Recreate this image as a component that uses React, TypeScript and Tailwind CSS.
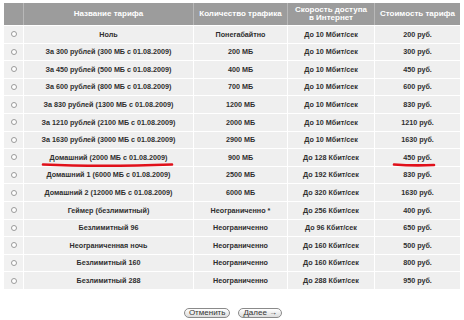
import React from "react";

const rows: [string, string, string, string][] = [
  ["Ноль", "Понегабайтно", "До 10 Мбит/сек", "200 руб."],
  ["За 300 рублей (300 МБ с 01.08.2009)", "200 МБ", "До 10 Мбит/сек", "300 руб."],
  ["За 450 рублей (500 МБ с 01.08.2009)", "400 МБ", "До 10 Мбит/сек", "450 руб."],
  ["За 600 рублей (800 МБ с 01.08.2009)", "700 МБ", "До 10 Мбит/сек", "600 руб."],
  ["За 830 рублей (1300 МБ с 01.08.2009)", "1200 МБ", "До 10 Мбит/сек", "830 руб."],
  ["За 1210 рублей (2100 МБ с 01.08.2009)", "2000 МБ", "До 10 Мбит/сек", "1210 руб."],
  ["За 1630 рублей (3000 МБ с 01.08.2009)", "2900 МБ", "До 10 Мбит/сек", "1630 руб."],
  ["Домашний (2000 МБ с 01.08.2009)", "900 МБ", "До 128 Кбит/сек", "450 руб."],
  ["Домашний 1 (6000 МБ с 01.08.2009)", "2500 МБ", "До 192 Кбит/сек", "830 руб."],
  ["Домашний 2 (12000 МБ с 01.08.2009)", "6000 МБ", "До 320 Кбит/сек", "1630 руб."],
  ["Геймер (безлимитный)", "Неограниченно *", "До 256 Кбит/сек", "400 руб."],
  ["Безлимитный 96", "Неограниченно", "До 96 Кбит/сек", "650 руб."],
  ["Неограниченная ночь", "Неограниченно", "До 160 Кбит/сек", "500 руб."],
  ["Безлимитный 160", "Неограниченно", "До 160 Кбит/сек", "800 руб."],
  ["Безлимитный 288", "Неограниченно", "До 288 Кбит/сек", "950 руб."],
];

const font = { fontFamily: "'Liberation Sans', Arial, sans-serif" };
const headCell =
  "bg-[#9c9c9c] text-white font-bold text-[8px] leading-[8px] flex items-center justify-center text-center whitespace-nowrap";

export default function App() {
  return (
    <div className="relative w-[464px] h-[320px] bg-white overflow-hidden" style={font}>
      <div className="pt-[3px] pl-[4px]">
        <div className="w-[456px]">
          <div className="grid grid-cols-[19px_169px_93px_86px_85px] gap-px bg-[#b8b8b8] h-[22px]">
            <div className="bg-[#9c9c9c]" />
            <div className={headCell}>Название тарифа</div>
            <div className={headCell}>Количество трафика</div>
            <div className={headCell}>
              Скорость доступа
              <br />в Интернет
            </div>
            <div className={headCell}>Стоимость тарифа</div>
          </div>
          <div className="h-px bg-white" />
          <div className="grid grid-cols-[19px_169px_93px_86px_85px] grid-rows-[repeat(15,16.6px)] gap-px bg-white">
            {rows.map((r, i) => (
              <React.Fragment key={i}>
                <div className="bg-[#f1f1f1] flex items-center justify-center">
                  <div className="w-[6px] h-[6px] rounded-full border border-[#9a9a9a] bg-white" />
                </div>
                {r.map((c, j) => (
                  <div
                    key={j}
                    className="bg-[#efefef] text-[#2e2e2e] font-bold text-[7.2px] leading-none flex items-center justify-center whitespace-nowrap"
                  >
                    {c}
                  </div>
                ))}
              </React.Fragment>
            ))}
          </div>
        </div>
      </div>
      <div className="flex justify-center gap-[8px] mt-[19px] pl-[2px]">
        <button className="h-[10px] px-[4px] rounded-full border border-[#8a8a8a] bg-gradient-to-b from-white to-[#dcdcdc] text-[8px] leading-none text-[#333] flex items-center">
          Отменить
        </button>
        <button className="h-[10px] px-[4px] rounded-full border border-[#8a8a8a] bg-gradient-to-b from-white to-[#dcdcdc] text-[8px] leading-none text-[#333] flex items-center">
          Далее →
        </button>
      </div>
      <svg className="absolute left-0 top-0" width="464" height="320" viewBox="0 0 464 320">
        <path d="M43 164.5 Q100 167 172 164.5" stroke="#e0101a" strokeWidth="2.6" fill="none" strokeLinecap="round" />
        <path d="M394 164.5 Q414 166 434 165" stroke="#e0101a" strokeWidth="2.6" fill="none" strokeLinecap="round" />
      </svg>
    </div>
  );
}
